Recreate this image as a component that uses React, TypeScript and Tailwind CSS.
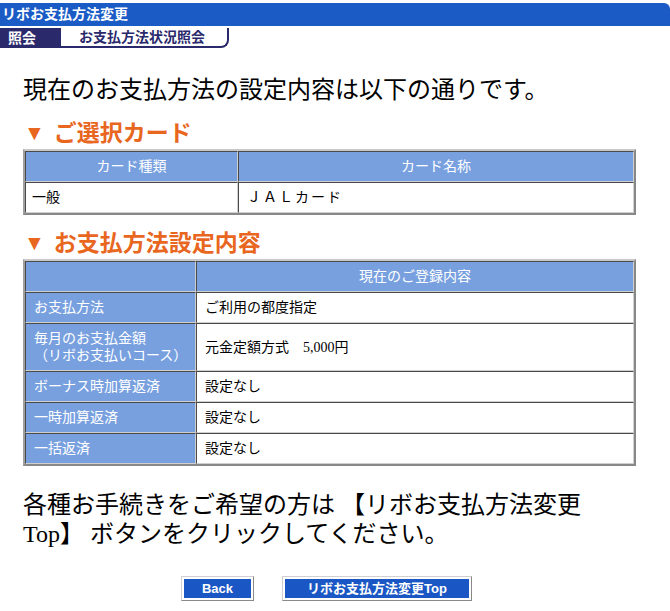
const serif = "font-['Liberation_Serif','Noto_Sans_CJK_JP',serif]";
const sans = "font-['Liberation_Sans','Noto_Sans_CJK_JP',sans-serif]";

const cellBorder =
  "border border-t-[#4a4a4a] border-l-[#4a4a4a] border-b-[#cfcfcf] border-r-[#cfcfcf]";
const tableBorder =
  "border-separate border-spacing-0 border-2 border-t-[#c8c8c8] border-l-[#a0a0a0] border-b-[#888] border-r-[#888]";

const SectionTitle = ({ children }: { children: string }) => (
  <h2
    className={`${sans} flex items-center text-[23px] font-bold leading-[26px] text-[#e8661e]`}
  >
    <span className="mr-[9px] ml-[1px] text-[21px]">▼</span>
    {children}
  </h2>
);

const rows = [
  { label: ["お支払方法"], value: "ご利用の都度指定", h: "h-[31px]" },
  {
    label: ["毎月のお支払金額", "（リボお支払いコース）"],
    value: "元金定額方式　5,000円",
    h: "h-[48px]",
  },
  { label: ["ボーナス時加算返済"], value: "設定なし", h: "h-[31px]" },
  { label: ["一時加算返済"], value: "設定なし", h: "h-[31px]" },
  { label: ["一括返済"], value: "設定なし", h: "h-[31px]" },
];

const NavButton = ({ label, w }: { label: string; w: string }) => (
  <button
    className={`${sans} ${w} h-[25px] border border-t-[#d0d0d0] border-l-[#d0d0d0] border-b-[#8a8a8a] border-r-[#8a8a8a] bg-white p-[2px]`}
  >
    <span className="flex h-full w-full items-center justify-center bg-[#1a57c4] text-[13px] font-bold text-white">
      {label}
    </span>
  </button>
);

export default function App() {
  return (
    <div className="min-h-[611px] w-[670px] bg-white pt-[3px] text-black">
      {/* title bar */}
      <div
        className={`${sans} flex h-[23px] items-center rounded-tr-[6px] bg-[#1a5bc5] pl-[2px] text-[14px] font-bold text-white`}
      >
        リボお支払方法変更
      </div>

      {/* tabs */}
      <div className={`${sans} mt-[2px] flex h-[20px] text-[14px] font-bold`}>
        <div className="flex w-[61px] items-center bg-[#2a296c] pl-[8px] text-white">
          照会
        </div>
        <div className="flex w-[168px] items-center rounded-br-[8px] border-r-2 border-b-2 border-[#2a296c] bg-white pl-[18px] text-[#2a296c]">
          お支払方法状況照会
        </div>
      </div>

      <div className="px-[23px]">
        <p className={`${serif} mt-[27px] text-[24px] leading-[30px]`}>
          現在のお支払方法の設定内容は以下の通りです。
        </p>

        <div className="mt-[15px]">
          <SectionTitle>ご選択カード</SectionTitle>
        </div>

        <table
          className={`${serif} ${tableBorder} mt-[3px] w-[613px] table-fixed text-[14px]`}
        >
          <colgroup>
            <col className="w-[213px]" />
            <col />
          </colgroup>
          <thead>
            <tr className="h-[31px] bg-[#78a0df] text-white">
              <th className={`${cellBorder} font-normal`}>カード種類</th>
              <th className={`${cellBorder} font-normal`}>カード名称</th>
            </tr>
          </thead>
          <tbody>
            <tr className="h-[31px]">
              <td className={`${cellBorder} pl-[6px]`}>一般</td>
              <td className={`${cellBorder} pl-[8px] tracking-[2px]`}>
                ＪＡＬカード
              </td>
            </tr>
          </tbody>
        </table>

        <div className="mt-[15px]">
          <SectionTitle>お支払方法設定内容</SectionTitle>
        </div>

        <table
          className={`${serif} ${tableBorder} mt-[3px] w-[613px] table-fixed text-[14px]`}
        >
          <colgroup>
            <col className="w-[171px]" />
            <col />
          </colgroup>
          <thead>
            <tr className="h-[31px] bg-[#78a0df] text-white">
              <th className={cellBorder}></th>
              <th className={`${cellBorder} font-normal`}>現在のご登録内容</th>
            </tr>
          </thead>
          <tbody>
            {rows.map((r) => (
              <tr key={r.value + r.label[0]} className={r.h}>
                <td
                  className={`${cellBorder} bg-[#78a0df] pl-[8px] leading-[17px] text-white`}
                >
                  {r.label.map((l) => (
                    <div key={l}>{l}</div>
                  ))}
                </td>
                <td className={`${cellBorder} pl-[8px]`}>{r.value}</td>
              </tr>
            ))}
          </tbody>
        </table>

        <p className={`${serif} mt-[25px] text-[24px] leading-[29px]`}>
          各種お手続きをご希望の方は 【リボお支払方法変更
          <br />
          Top】 ボタンをクリックしてください。
        </p>

        <div className="mt-[27px] flex justify-center gap-[28px] pr-[17px]">
          <NavButton label="Back" w="w-[73px]" />
          <NavButton label="リボお支払方法変更Top" w="w-[190px]" />
        </div>
      </div>
    </div>
  );
}
